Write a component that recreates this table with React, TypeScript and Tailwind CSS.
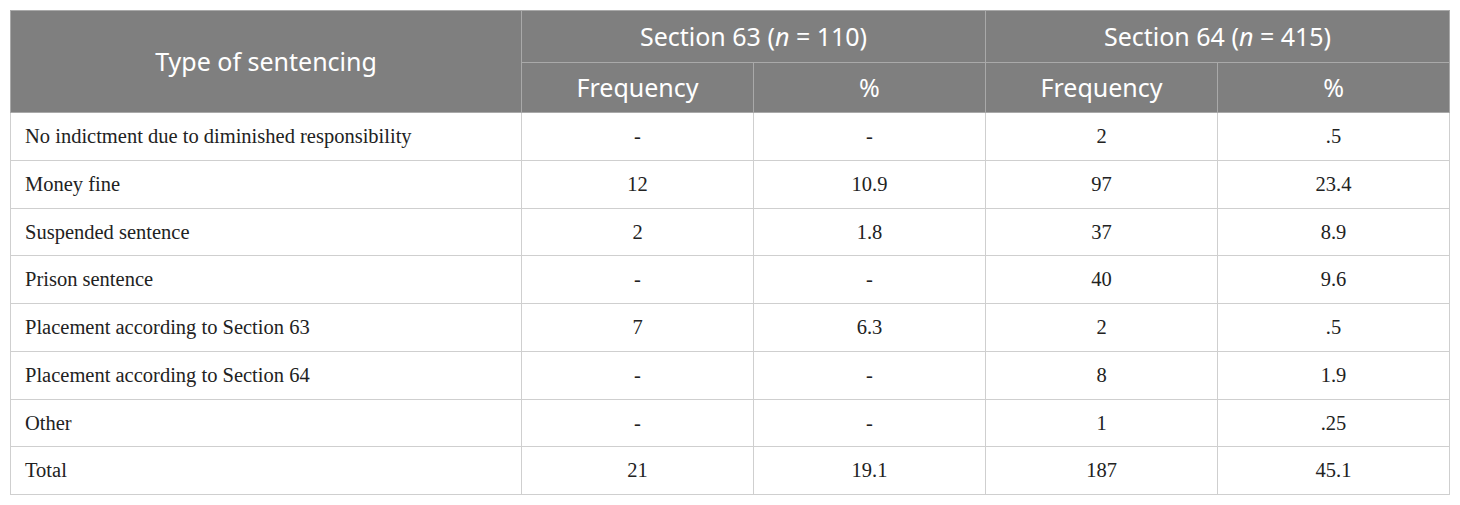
const rows = [
  ["No indictment due to diminished responsibility", "-", "-", "2", ".5"],
  ["Money fine", "12", "10.9", "97", "23.4"],
  ["Suspended sentence", "2", "1.8", "37", "8.9"],
  ["Prison sentence", "-", "-", "40", "9.6"],
  ["Placement according to Section 63", "7", "6.3", "2", ".5"],
  ["Placement according to Section 64", "-", "-", "8", "1.9"],
  ["Other", "-", "-", "1", ".25"],
  ["Total", "21", "19.1", "187", "45.1"],
]

const head = "border border-[#a9a9a9] bg-[#7f7f7f] text-white font-normal text-center"
const cell = "border border-[#cfcfcf] text-center"

export default function App() {
  return (
    <div className="bg-white min-h-screen pt-[10px] pl-[10px]">
      <table className="border-collapse table-fixed w-[1440px] text-[#222]">
        <colgroup>
          <col className="w-[511px]" />
          <col className="w-[232px]" />
          <col className="w-[232px]" />
          <col className="w-[232px]" />
          <col className="w-[232px]" />
        </colgroup>
        <thead className="font-['Noto_Sans','Open_Sans',sans-serif] text-[25px]">
          <tr className="h-[52px]">
            <th rowSpan={2} className={head}>Type of sentencing</th>
            <th colSpan={2} className={head}>
              Section 63 (<i>n</i> = 110)
            </th>
            <th colSpan={2} className={head}>
              Section 64 (<i>n</i> = 415)
            </th>
          </tr>
          <tr className="h-[50px]">
            <th className={head}>Frequency</th>
            <th className={head}>%</th>
            <th className={head}>Frequency</th>
            <th className={head}>%</th>
          </tr>
        </thead>
        <tbody className="font-['Liberation_Serif',serif] text-[20.5px]">
          {rows.map((r) => (
            <tr key={r[0]} className="h-[47.75px]">
              <td className="border border-[#cfcfcf] pl-[14px]">{r[0]}</td>
              {r.slice(1).map((v, i) => (
                <td key={i} className={cell}>{v}</td>
              ))}
            </tr>
          ))}
        </tbody>
      </table>
    </div>
  )
}
